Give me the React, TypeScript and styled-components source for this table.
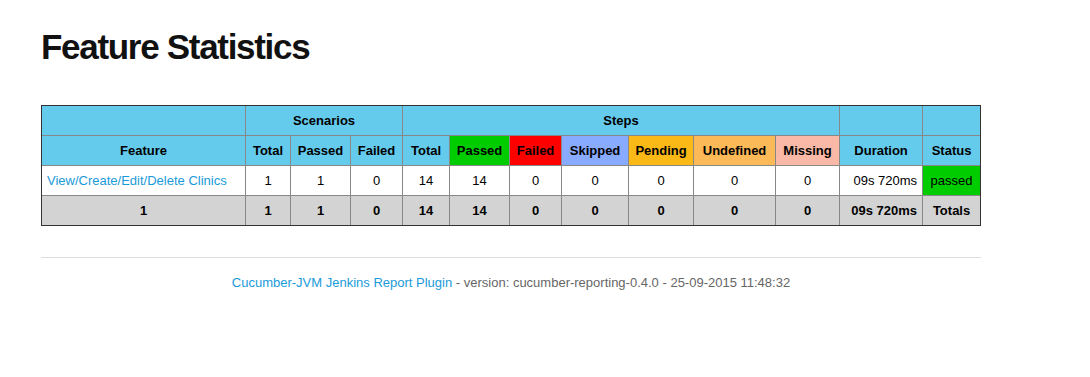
import React from "react"
import styled, { createGlobalStyle } from "styled-components"

const GlobalStyle = createGlobalStyle`
  body {
    margin: 0;
    background: #fff;
    font-family: "Liberation Sans", Arial, sans-serif;
    color: #000;
  }
`

const Page = styled.div`
  width: 940px;
  padding: 25px 0 0 41px;
`

const Title = styled.h1`
  margin: 0 0 36px;
  font-size: 35px;
  line-height: 44px;
  font-weight: bold;
  letter-spacing: -1.3px;
  color: #111;
`

const Table = styled.table`
  width: 939px;
  border-collapse: collapse;
  table-layout: fixed;
  border: 1px solid #333;
  outline: 1px solid #333;
  outline-offset: -1px;
  font-size: 13px;
`

const Cell = styled.td<{ $bg?: string; $align?: string; $bold?: boolean }>`
  height: 29px;
  padding: 0 5px;
  border: 1px solid #888;
  background: ${(p) => p.$bg || "#fff"};
  text-align: ${(p) => p.$align || "center"};
  font-weight: ${(p) => (p.$bold ? "bold" : "normal")};
  white-space: nowrap;
  overflow: hidden;
`

const Head = styled(Cell).attrs({ as: "th" })`
  font-weight: bold;
`

const FeatureLink = styled.a`
  color: #1a9ad9;
  text-decoration: none;
`

const Rule = styled.hr`
  margin: 31px 0 0;
  border: 0;
  border-top: 1px solid #ddd;
`

const Footer = styled.p`
  margin: 17px 0 0;
  text-align: center;
  font-size: 13px;
  color: #666;
`

const FooterLink = styled.a`
  color: #1a9ad9;
  text-decoration: none;
`

const HEAD = "#65cbed"
const TOTAL = "#d3d3d3"
const widths = [204, 45, 60, 52, 47, 60, 52, 67, 65, 82, 64, 83, 58]

const stepHeads: [string, string][] = [
  ["Total", HEAD],
  ["Passed", "#00cc00"],
  ["Failed", "#ff0000"],
  ["Skipped", "#88aaff"],
  ["Pending", "#fbb917"],
  ["Undefined", "#fbb957"],
  ["Missing", "#f9b9a6"],
]

export default function App() {
  const counts = ["1", "1", "0", "14", "14", "0", "0", "0", "0", "0"]
  return (
    <Page>
      <GlobalStyle />
      <Title>Feature Statistics</Title>
      <Table>
        <colgroup>
          {widths.map((w, i) => (
            <col key={i} style={{ width: w }} />
          ))}
        </colgroup>
        <thead>
          <tr>
            <Head $bg={HEAD} />
            <Head $bg={HEAD} colSpan={3}>Scenarios</Head>
            <Head $bg={HEAD} colSpan={7}>Steps</Head>
            <Head $bg={HEAD} />
            <Head $bg={HEAD} />
          </tr>
          <tr>
            <Head $bg={HEAD}>Feature</Head>
            <Head $bg={HEAD}>Total</Head>
            <Head $bg={HEAD}>Passed</Head>
            <Head $bg={HEAD}>Failed</Head>
            {stepHeads.map(([label, bg]) => (
              <Head key={label} $bg={bg}>{label}</Head>
            ))}
            <Head $bg={HEAD}>Duration</Head>
            <Head $bg={HEAD}>Status</Head>
          </tr>
        </thead>
        <tbody>
          <tr>
            <Cell $align="left">
              <FeatureLink href="#">View/Create/Edit/Delete Clinics</FeatureLink>
            </Cell>
            {counts.map((c, i) => (
              <Cell key={i}>{c}</Cell>
            ))}
            <Cell $align="right">09s 720ms</Cell>
            <Cell $bg="#00cc00">passed</Cell>
          </tr>
          <tr>
            <Cell $bg={TOTAL} $bold>1</Cell>
            {counts.map((c, i) => (
              <Cell key={i} $bg={TOTAL} $bold>{c}</Cell>
            ))}
            <Cell $bg={TOTAL} $bold $align="right">09s 720ms</Cell>
            <Cell $bg={TOTAL} $bold>Totals</Cell>
          </tr>
        </tbody>
      </Table>
      <Rule />
      <Footer>
        <FooterLink href="#">Cucumber-JVM Jenkins Report Plugin</FooterLink> - version:
        cucumber-reporting-0.4.0 - 25-09-2015 11:48:32
      </Footer>
    </Page>
  )
}
